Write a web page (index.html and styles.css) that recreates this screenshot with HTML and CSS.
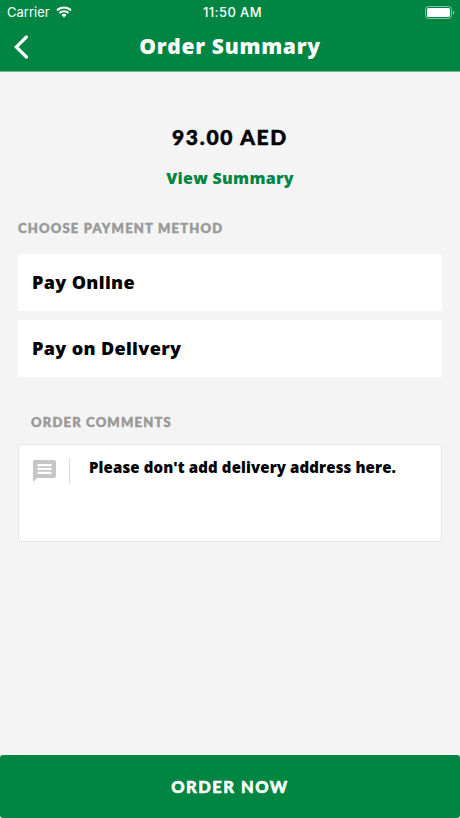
FILE: index.html
```html
<!DOCTYPE html>
<html lang="en">
<head>
  <meta charset="UTF-8">
  <meta name="viewport" content="width=device-width, initial-scale=1">
  <title>Order Summary</title>
  <link rel="stylesheet" href="styles.css">
</head>
<body>

  <header class="header">
    <div class="status-bar">
      <div class="carrier">
        <span>Carrier</span>
        <svg class="wifi" viewBox="0 0 16 12" width="16" height="12">
          <path d="M1 4.4a10 10 0 0 1 14 0M3.4 7a6.6 6.6 0 0 1 9.2 0" fill="none" stroke="#fff" stroke-width="2"/>
          <path d="M5.5 8.9a3.6 3.6 0 0 1 5 0L8 11.4z" fill="#fff"/>
        </svg>
      </div>
      <div class="time">11:50 AM</div>
      <svg class="battery" viewBox="0 0 30 13" width="30" height="13">
        <rect x="0.5" y="0.5" width="26" height="12" rx="3" fill="none" stroke="#fff" stroke-opacity="0.5"/>
        <rect x="2" y="2" width="23" height="9" rx="1.5" fill="#fff"/>
        <path d="M28 4.5v4a2.2 2.2 0 0 0 0-4z" fill="#fff" fill-opacity="0.6"/>
      </svg>
    </div>
    <div class="nav-bar">
      <a href="#" class="back" aria-label="Back">
        <svg viewBox="0 0 14 24" width="14" height="24">
          <path d="M12.4 2L2.2 12L12.4 22" fill="none" stroke="#fff" stroke-width="3.2" stroke-linecap="round" stroke-linejoin="miter"/>
        </svg>
      </a>
      <h1 class="title">Order Summary</h1>
    </div>
  </header>

  <main class="content">
    <div class="price">93.00 AED</div>
    <a href="#" class="view-summary">View Summary</a>

    <h2 class="label">CHOOSE PAYMENT METHOD</h2>
    <div class="methods">
      <button class="method online">Pay Online</button>
      <button class="method delivery">Pay on Delivery</button>
    </div>

    <h2 class="label comments-label">ORDER COMMENTS</h2>
    <div class="comments">
      <svg class="comment-icon" viewBox="0 0 23 22" width="23" height="22">
        <path d="M2 0h19a2 2 0 0 1 2 2v14a2 2 0 0 1-2 2H4l-4 4V2a2 2 0 0 1 2-2z" fill="#c6c6c6"/>
        <path d="M4.5 5.2h14M4.5 9h14M4.5 12.8h14" stroke="#fff" stroke-width="2.2"/>
      </svg>
      <div class="divider"></div>
      <p class="comment-text">Please don't add delivery address here.</p>
    </div>
  </main>

  <button class="order-now"><span>ORDER NOW</span></button>

</body>
</html>
```
FILE: styles.css
```css
* {
  box-sizing: border-box;
}

body {
  margin: 0;
  height: 818px;
  display: flex;
  flex-direction: column;
  background: #f4f4f4;
  color: #000;
  font-family: "Open Sans", sans-serif;
  font-weight: 800;
}

h1, h2, p {
  margin: 0;
}

a {
  text-decoration: none;
}

button {
  border: none;
  font-family: inherit;
  font-weight: inherit;
  color: inherit;
}

.header {
  height: 72px;
  background: #008542;
  border-bottom: 1px solid #73b692;
  color: #fff;
}

.status-bar {
  display: grid;
  grid-template-columns: 1fr auto 1fr;
  align-items: center;
  height: 24px;
  padding: 0 5px 0 7px;
  font: 400 13px/24px Inter, sans-serif;
}

.carrier {
  display: flex;
  align-items: center;
  gap: 6px;
}

.time {
  padding-left: 3px;
  font-weight: 500;
  letter-spacing: 0.4px;
}

.battery {
  justify-self: end;
}

.nav-bar {
  display: grid;
  grid-template-columns: 1fr auto 1fr;
  align-items: center;
  height: 46px;
  padding: 0 14px;
}

.back {
  display: flex;
}

.title {
  padding-bottom: 2px;
  font-size: 21px;
  font-weight: 800;
  line-height: 26px;
  letter-spacing: 0.7px;
}

.content {
  flex: 1;
  display: flex;
  flex-direction: column;
  padding: 52px 18px 0;
}

/* all-caps text is set in the rounder face */
.price,
.label,
.order-now {
  font-family: Lato, sans-serif;
  font-weight: 900;
  -webkit-text-stroke: 0.5px currentColor;
}

.price {
  align-self: center;
  font-size: 21px;
  line-height: 26px;
  letter-spacing: 1.7px;
}

.view-summary {
  align-self: center;
  margin-top: 18px;
  color: #008542;
  font-size: 16px;
  line-height: 20px;
  letter-spacing: 0.3px;
}

.label {
  margin-top: 32px;
  color: #999;
  font-size: 13px;
  line-height: 16px;
  letter-spacing: 1.2px;
}

.methods {
  display: flex;
  flex-direction: column;
  gap: 9px;
  margin-top: 18px;
}

.method {
  height: 57px;
  padding: 0 14px 2px;
  background: #fff;
  border-radius: 2px;
  font-size: 18px;
  text-align: left;
  letter-spacing: 0.35px;
}

.comments-label {
  margin-top: 37px;
  padding-left: 13px;
}

.comments {
  display: flex;
  align-items: flex-start;
  height: 98px;
  margin-top: 14px;
  padding: 13px 14px;
  background: #fff;
  border: 1px solid #e4e4e4;
  border-radius: 3px;
}

.comment-icon {
  margin-top: 2px;
}

.divider {
  width: 1px;
  height: 26px;
  margin: 0 19px 0 13px;
  background: #dcdcdc;
}

.comment-text {
  font-size: 15px;
  line-height: 18px;
  letter-spacing: 0.12px;
}

.order-now {
  height: 63px;
  background: #008542;
  border-radius: 3px;
  color: #fff;
  font-size: 16.5px;
  letter-spacing: 1.5px;
}
```
